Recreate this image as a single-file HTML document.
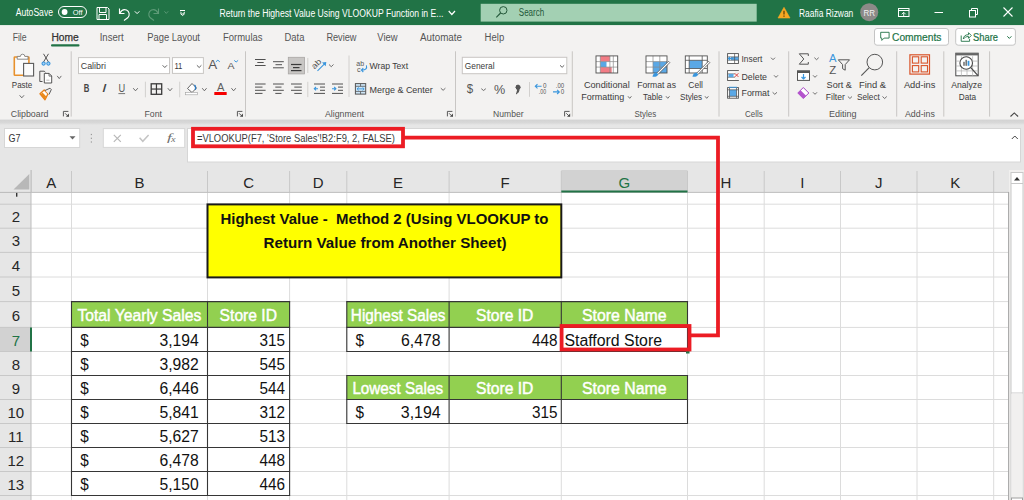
<!DOCTYPE html>
<html><head><meta charset="utf-8"><style>
html,body{margin:0;padding:0;width:1024px;height:500px;overflow:hidden;background:#fff}
svg{display:block}
text{font-family:"Liberation Sans",sans-serif}
</style></head><body>
<svg width="1024" height="500" viewBox="0 0 1024 500">
<defs><linearGradient id="sh" x1="0" y1="0" x2="0" y2="1"><stop offset="0" stop-color="#d2d2d2"/><stop offset="0.6" stop-color="#d8d8d8"/><stop offset="1" stop-color="#e6e6e6"/></linearGradient></defs>
<rect x="0" y="0" width="1024" height="500" fill="#ffffff" />
<rect x="0" y="0" width="1024" height="25.3" fill="#217346" />
<rect x="0" y="25.3" width="1024" height="94.2" fill="#f3f2f1" />
<rect x="0" y="119.5" width="1024" height="5.5" fill="url(#sh)" />
<rect x="0" y="125" width="1024" height="45" fill="#e6e6e6" />
<text x="15.7" y="16.3" font-size="10" font-weight="normal" fill="#ffffff" text-anchor="start" textLength="37.3" lengthAdjust="spacingAndGlyphs" >AutoSave</text>
<rect x="58.5" y="6.5" width="28" height="11" fill="none" stroke="#ffffff" stroke-width="1" rx="5.5" />
<circle cx="64.6" cy="12" r="2.9" fill="#ffffff"/>
<text x="72.7" y="15.2" font-size="7.5" font-weight="normal" fill="#ffffff" text-anchor="start" textLength="9.8" lengthAdjust="spacingAndGlyphs" >Off</text>
<path d="M97 7.5 h10.5 l1.5 1.5 v10.5 h-12 z" stroke="#ffffff" fill="none" stroke-width="1" />
<path d="M99.5 7.5 v5 h6.5 v-5" stroke="#ffffff" fill="none" stroke-width="1" />
<path d="M99 19.5 v-5 h7.5 v5" stroke="#ffffff" fill="none" stroke-width="1" />
<path d="M119.5 8.5 v5 h5" stroke="#ffffff" fill="none" stroke-width="1.1" />
<path d="M120 13 c1.5-3 4-4 6.5-3 c3 1.5 3.5 5 1.5 7.5 l-4 3" stroke="#ffffff" fill="none" stroke-width="1.1" />
<path d="M134.8 11.3 L137.10000000000002 13.6 L139.4 11.3" stroke="#ffffff" fill="none" stroke-width="1" />
<path d="M158.5 8.5 v5 h-5" stroke="#5e9b78" fill="none" stroke-width="1.1" />
<path d="M158 13 c-1.5-3 -4-4 -6.5-3 c-3 1.5 -3.5 5 -1.5 7.5 l4 3" stroke="#5e9b78" fill="none" stroke-width="1.1" />
<path d="M164.4 11.3 L166.3 13.4 L168.2 11.3" stroke="#5e9b78" fill="none" stroke-width="0.9" />
<line x1="180" y1="10.5" x2="185" y2="10.5" stroke="#ffffff" stroke-width="1" />
<path d="M180.3 12 L182.60000000000002 14 L184.9 12" stroke="#ffffff" fill="none" stroke-width="1" />
<path d="M180.3 13.5 L182.60000000000002 15.5 L184.9 13.5" stroke="#ffffff" fill="none" stroke-width="1" />
<text x="219.5" y="17.2" font-size="10" font-weight="normal" fill="#ffffff" text-anchor="start" textLength="224" lengthAdjust="spacingAndGlyphs" >Return the Highest Value Using VLOOKUP Function in E...</text>
<path d="M448.7 11 L451.85 14.5 L455 11" stroke="#ffffff" fill="none" stroke-width="1.2" />
<rect x="480.7" y="3.8" width="276" height="17.8" fill="#a3d0b3" />
<circle cx="503.3" cy="10.3" r="3.7" fill="none" stroke="#24583a" stroke-width="1"/>
<line x1="500.6" y1="13" x2="496.3" y2="17.4" stroke="#24583a" stroke-width="1.1" />
<text x="518.8" y="16.3" font-size="10" font-weight="normal" fill="#24583a" text-anchor="start" textLength="25.4" lengthAdjust="spacingAndGlyphs" >Search</text>
<path d="M784 7.3 l6 10.7 h-12 z" stroke="#f7a823" fill="#f7a823" stroke-width="0.6" stroke-linejoin="round"/>
<line x1="784" y1="10.8" x2="784" y2="14.6" stroke="#4a3000" stroke-width="1.1" />
<line x1="784" y1="15.6" x2="784" y2="16.8" stroke="#4a3000" stroke-width="1.1" />
<text x="799" y="16.9" font-size="10" font-weight="normal" fill="#ffffff" text-anchor="start" textLength="54.3" lengthAdjust="spacingAndGlyphs" >Raafia Rizwan</text>
<circle cx="869.2" cy="12.2" r="9" fill="#8c8a88"/>
<text x="869.2" y="15.6" font-size="8.5" font-weight="normal" fill="#f2f2f2" text-anchor="middle" textLength="11.5" lengthAdjust="spacingAndGlyphs" >RR</text>
<rect x="898.5" y="8.5" width="10.5" height="8" fill="none" stroke="#ffffff" stroke-width="1" />
<line x1="898.5" y1="10.5" x2="909" y2="10.5" stroke="#ffffff" stroke-width="1" />
<path d="M901.7 14.3 l2 -2 l2 2 M903.7 12.5 v4" stroke="#ffffff" fill="none" stroke-width="0.9" />
<line x1="934.5" y1="12.5" x2="943" y2="12.5" stroke="#ffffff" stroke-width="1" />
<rect x="969.5" y="10.5" width="6" height="6.5" fill="none" stroke="#ffffff" stroke-width="1" />
<path d="M971.5 10.5 v-2 h6 v6 h-2" stroke="#ffffff" fill="none" stroke-width="1" />
<path d="M1003.5 7.5 l9 9 M1012.5 7.5 l-9 9" stroke="#ffffff" fill="none" stroke-width="1.1" />
<text x="12.7" y="40.6" font-size="10" font-weight="normal" fill="#555555" text-anchor="start" textLength="13.9" lengthAdjust="spacingAndGlyphs" >File</text>
<text x="51.4" y="40.6" font-size="10" font-weight="normal" fill="#333333" text-anchor="start" textLength="27.3" lengthAdjust="spacingAndGlyphs" stroke="#333" stroke-width="0.25">Home</text>
<text x="99.7" y="40.6" font-size="10" font-weight="normal" fill="#555555" text-anchor="start" textLength="23.9" lengthAdjust="spacingAndGlyphs" >Insert</text>
<text x="147.2" y="40.6" font-size="10" font-weight="normal" fill="#555555" text-anchor="start" textLength="52.8" lengthAdjust="spacingAndGlyphs" >Page Layout</text>
<text x="223" y="40.6" font-size="10" font-weight="normal" fill="#555555" text-anchor="start" textLength="39.5" lengthAdjust="spacingAndGlyphs" >Formulas</text>
<text x="284.5" y="40.6" font-size="10" font-weight="normal" fill="#555555" text-anchor="start" textLength="19.9" lengthAdjust="spacingAndGlyphs" >Data</text>
<text x="326.4" y="40.6" font-size="10" font-weight="normal" fill="#555555" text-anchor="start" textLength="30.1" lengthAdjust="spacingAndGlyphs" >Review</text>
<text x="377.3" y="40.6" font-size="10" font-weight="normal" fill="#555555" text-anchor="start" textLength="20.3" lengthAdjust="spacingAndGlyphs" >View</text>
<text x="420" y="40.6" font-size="10" font-weight="normal" fill="#555555" text-anchor="start" textLength="42" lengthAdjust="spacingAndGlyphs" >Automate</text>
<text x="484.6" y="40.6" font-size="10" font-weight="normal" fill="#555555" text-anchor="start" textLength="19.6" lengthAdjust="spacingAndGlyphs" >Help</text>
<rect x="51" y="44.2" width="28.5" height="2.3" fill="#217346" rx="1" />
<rect x="874.5" y="28.5" width="74" height="16.7" fill="#ffffff" stroke="#c4c4c4" stroke-width="1" rx="2.5" />
<path d="M880.7 32.3 h8.4 v5.8 h-5 l-2.3 2.3 v-2.3 h-1.1 z" stroke="#217346" fill="none" stroke-width="0.9" />
<text x="892" y="40.5" font-size="10" font-weight="normal" fill="#217346" text-anchor="start" textLength="49.4" lengthAdjust="spacingAndGlyphs" stroke="#217346" stroke-width="0.2">Comments</text>
<rect x="955.7" y="28.5" width="59.7" height="16.7" fill="#ffffff" stroke="#c4c4c4" stroke-width="1" rx="2.5" />
<path d="M961.2 35.5 v5.8 h8.4 v-2.5" stroke="#217346" fill="none" stroke-width="0.9" />
<path d="M963.3 39 c0.3-2.8 2-4.3 5.2-4.3 v-2 l2.8 2.8 l-2.8 2.8 v-1.8 c-2.2 0-3.8 0.8-5.2 2.5 z" stroke="#217346" fill="none" stroke-width="0.9" />
<text x="973" y="40.5" font-size="10" font-weight="normal" fill="#217346" text-anchor="start" textLength="25" lengthAdjust="spacingAndGlyphs" stroke="#217346" stroke-width="0.2">Share</text>
<path d="M1007.3 36.3 L1009.3499999999999 38.4 L1011.4 36.3" stroke="#217346" fill="none" stroke-width="1" />
<line x1="71.2" y1="51.3" x2="71.2" y2="116.6" stroke="#c8c6c4" stroke-width="1" />
<line x1="245.5" y1="51.3" x2="245.5" y2="116.6" stroke="#c8c6c4" stroke-width="1" />
<line x1="455.5" y1="51.3" x2="455.5" y2="116.6" stroke="#c8c6c4" stroke-width="1" />
<line x1="572.3" y1="51.3" x2="572.3" y2="116.6" stroke="#c8c6c4" stroke-width="1" />
<line x1="719" y1="51.3" x2="719" y2="116.6" stroke="#c8c6c4" stroke-width="1" />
<line x1="788.7" y1="51.3" x2="788.7" y2="116.6" stroke="#c8c6c4" stroke-width="1" />
<line x1="896.7" y1="51.3" x2="896.7" y2="116.6" stroke="#c8c6c4" stroke-width="1" />
<line x1="943.8" y1="51.3" x2="943.8" y2="116.6" stroke="#c8c6c4" stroke-width="1" />
<line x1="989.6" y1="51.3" x2="989.6" y2="116.6" stroke="#c8c6c4" stroke-width="1" />
<text x="10.8" y="117" font-size="9.3" font-weight="normal" fill="#525252" text-anchor="start" textLength="37.7" lengthAdjust="spacingAndGlyphs" >Clipboard</text>
<text x="144.5" y="117" font-size="9.3" font-weight="normal" fill="#525252" text-anchor="start" textLength="17.5" lengthAdjust="spacingAndGlyphs" >Font</text>
<text x="325" y="117" font-size="9.3" font-weight="normal" fill="#525252" text-anchor="start" textLength="39" lengthAdjust="spacingAndGlyphs" >Alignment</text>
<text x="493.1" y="117" font-size="9.3" font-weight="normal" fill="#525252" text-anchor="start" textLength="30.5" lengthAdjust="spacingAndGlyphs" >Number</text>
<text x="634.5" y="117" font-size="9.3" font-weight="normal" fill="#525252" text-anchor="start" textLength="21.7" lengthAdjust="spacingAndGlyphs" >Styles</text>
<text x="745" y="117" font-size="9.3" font-weight="normal" fill="#525252" text-anchor="start" textLength="17.7" lengthAdjust="spacingAndGlyphs" >Cells</text>
<text x="829" y="117" font-size="9.3" font-weight="normal" fill="#525252" text-anchor="start" textLength="27.6" lengthAdjust="spacingAndGlyphs" >Editing</text>
<text x="905" y="117" font-size="9.3" font-weight="normal" fill="#525252" text-anchor="start" textLength="29.8" lengthAdjust="spacingAndGlyphs" >Add-ins</text>
<path d="M63.4 116.4 v-5 h5" stroke="#5a5a5a" fill="none" stroke-width="1" />
<path d="M65.1 113.3 l3 3" stroke="#5a5a5a" fill="none" stroke-width="1" />
<path d="M69.0 113.6 v3.2 h-3.2 z" stroke="none" fill="#4a4a4a" stroke-width="1" />
<path d="M237.4 116.4 v-5 h5" stroke="#5a5a5a" fill="none" stroke-width="1" />
<path d="M239.10000000000002 113.3 l3 3" stroke="#5a5a5a" fill="none" stroke-width="1" />
<path d="M243.0 113.6 v3.2 h-3.2 z" stroke="none" fill="#4a4a4a" stroke-width="1" />
<path d="M447.40000000000003 116.4 v-5 h5" stroke="#5a5a5a" fill="none" stroke-width="1" />
<path d="M449.1 113.3 l3 3" stroke="#5a5a5a" fill="none" stroke-width="1" />
<path d="M453.0 113.6 v3.2 h-3.2 z" stroke="none" fill="#4a4a4a" stroke-width="1" />
<path d="M564.6 116.4 v-5 h5" stroke="#5a5a5a" fill="none" stroke-width="1" />
<path d="M566.3 113.3 l3 3" stroke="#5a5a5a" fill="none" stroke-width="1" />
<path d="M570.2 113.6 v3.2 h-3.2 z" stroke="none" fill="#4a4a4a" stroke-width="1" />
<path d="M1010.5 116.5 l3.8 -3.6 l3.8 3.6" stroke="#444" fill="none" stroke-width="1.1" />
<rect x="14.3" y="57" width="14.6" height="18.3" fill="#fbfbfb" stroke="#e8912d" stroke-width="1.6" rx="0.6" />
<path d="M17.2 59.2 v-2.8 h3.2 a2.2 2.2 0 0 1 4.4 0 h3.2 v2.8 z" stroke="#808080" fill="#ffffff" stroke-width="0.9" />
<rect x="23.6" y="63.4" width="10" height="12.6" fill="#fbfbfb" stroke="#5a5a5a" stroke-width="1.1" />
<text x="11.8" y="87.8" font-size="9.5" font-weight="normal" fill="#3b3b3b" text-anchor="start" textLength="20.5" lengthAdjust="spacingAndGlyphs" >Paste</text>
<path d="M19.6 95.3 L21.8 97.8 L24 95.3" stroke="#555" fill="none" stroke-width="0.85" />
<path d="M43.5 53.8 l5 8.2 M48.5 53.8 l-5 8.2" stroke="#444" fill="none" stroke-width="0.9" />
<circle cx="43.6" cy="63.6" r="1.6" fill="#a9d2f3" stroke="#3a96dd" stroke-width="1.1"/>
<circle cx="48.4" cy="63.6" r="1.6" fill="#a9d2f3" stroke="#3a96dd" stroke-width="1.1"/>
<path d="M42.5 81.5 h-2.7 v-10.3 h4.5 l1.2 1.2" stroke="#444" fill="none" stroke-width="0.9" />
<path d="M44.3 73.4 h4.8 l2.6 2.6 v7 h-7.4 z" stroke="#444" fill="#fff" stroke-width="0.9" />
<path d="M49 73.4 v2.7 h2.7" stroke="#444" fill="none" stroke-width="0.7" />
<line x1="46.3" y1="80.2" x2="49.5" y2="80.2" stroke="#aaa" stroke-width="0.8" />
<path d="M57.2 75.9 L59.25 78.6 L61.3 75.9" stroke="#555" fill="none" stroke-width="0.85" />
<path d="M40 93.7 L44.2 90 L48 93.8 L45 99.8 z" stroke="#e8821c" fill="#ffffff" stroke-width="1.4" stroke-linejoin="round"/>
<path d="M40.5 94.2 L45 99.2 L46.3 96.5 L42.5 92.6 z" stroke="none" fill="#ea8a1c" stroke-width="1" />
<path d="M45 90.5 l5 -2.3 l1.3 1.3 l-2.3 5" stroke="#4a4a4a" fill="#eee" stroke-width="0.9" />
<rect x="78.5" y="57.6" width="91" height="16" fill="#ffffff" stroke="#c8c6c4" stroke-width="1" />
<text x="80.8" y="69.1" font-size="9.5" font-weight="normal" fill="#3b3b3b" text-anchor="start" textLength="25.1" lengthAdjust="spacingAndGlyphs" >Calibri</text>
<path d="M162.6 65.3 L164.8 67.5 L167 65.3" stroke="#444" fill="none" stroke-width="0.85" />
<rect x="172.5" y="57.6" width="30.9" height="15.8" fill="#ffffff" stroke="#c8c6c4" stroke-width="1" />
<text x="174.4" y="69.1" font-size="9.5" font-weight="normal" fill="#3b3b3b" text-anchor="start" textLength="8" lengthAdjust="spacingAndGlyphs" >11</text>
<path d="M196.9 65.3 L199.15 67.5 L201.4 65.3" stroke="#444" fill="none" stroke-width="0.85" />
<text x="208.2" y="68.8" font-size="12.5" font-weight="normal" fill="#555" text-anchor="start" textLength="8.9" lengthAdjust="spacingAndGlyphs" >A</text>
<path d="M215.9 61.8 L217.85000000000002 60.2 L219.8 61.8" stroke="#3a96dd" fill="none" stroke-width="1" />
<text x="227.5" y="68.8" font-size="9.8" font-weight="normal" fill="#555" text-anchor="start" textLength="7" lengthAdjust="spacingAndGlyphs" >A</text>
<path d="M234.2 60.4 L236.14999999999998 62 L238.1 60.4" stroke="#3a96dd" fill="none" stroke-width="1" />
<text x="83.8" y="91.9" font-size="10" font-weight="bold" fill="#444" text-anchor="start" textLength="5.6" lengthAdjust="spacingAndGlyphs" >B</text>
<text x="102.1" y="91.9" font-size="10" font-weight="normal" fill="#444" text-anchor="start" textLength="4.6" lengthAdjust="spacingAndGlyphs" font-style="italic">I</text>
<text x="118.4" y="91.9" font-size="10" font-weight="normal" fill="#555" text-anchor="start" textLength="6.7" lengthAdjust="spacingAndGlyphs" >U</text>
<line x1="118.4" y1="93.6" x2="125.1" y2="93.6" stroke="#555" stroke-width="0.8" />
<path d="M133.2 88.2 L135.5 90.8 L137.8 88.2" stroke="#555" fill="none" stroke-width="0.85" />
<line x1="145.4" y1="81.7" x2="145.4" y2="97.3" stroke="#d2d0ce" stroke-width="1" />
<rect x="151.2" y="83.8" width="10.5" height="10.5" fill="none" stroke="#3a3a3a" stroke-width="1.3" />
<line x1="156.45" y1="83.8" x2="156.45" y2="94.3" stroke="#3a3a3a" stroke-width="1.2" />
<line x1="151.2" y1="89.05" x2="161.7" y2="89.05" stroke="#3a3a3a" stroke-width="1.2" />
<path d="M167.8 88.2 L170.0 90.8 L172.2 88.2" stroke="#555" fill="none" stroke-width="0.85" />
<line x1="179.7" y1="81.7" x2="179.7" y2="97.3" stroke="#d2d0ce" stroke-width="1" />
<path d="M187.5 88.5 l4.5 -5 l4.5 4.5 l-4.5 4.5 z" stroke="#555" fill="#fff" stroke-width="0.9" />
<path d="M194.3 85.3 c1.2 0.3 1.5 2 1 4.5" stroke="#2f7cc4" fill="none" stroke-width="1.4" />
<rect x="185.5" y="92.6" width="11.8" height="2.2" fill="#ffffff" stroke="#a0a0a0" stroke-width="0.6" />
<path d="M202.2 88.2 L204.39999999999998 90.8 L206.6 88.2" stroke="#555" fill="none" stroke-width="0.85" />
<text x="216.9" y="91.4" font-size="10.5" font-weight="normal" fill="#606060" text-anchor="start" textLength="7.4" lengthAdjust="spacingAndGlyphs" >A</text>
<rect x="214.3" y="92.1" width="12.4" height="3" fill="#f50000" rx="0.4" />
<path d="M231.4 88.2 L233.60000000000002 90.8 L235.8 88.2" stroke="#555" fill="none" stroke-width="0.85" />
<rect x="288.3" y="57.3" width="16.3" height="16.6" fill="#c8c6c4" stroke="#a8a6a4" stroke-width="0.8" />
<line x1="255" y1="59.5" x2="265.6" y2="59.5" stroke="#505050" stroke-width="1" />
<line x1="257.3" y1="62.5" x2="263.7" y2="62.5" stroke="#505050" stroke-width="1" />
<line x1="255" y1="65.5" x2="265.6" y2="65.5" stroke="#505050" stroke-width="1" />
<line x1="273" y1="61.7" x2="283.8" y2="61.7" stroke="#505050" stroke-width="1" />
<line x1="275.5" y1="64.7" x2="282" y2="64.7" stroke="#505050" stroke-width="1" />
<line x1="273" y1="67.8" x2="283.8" y2="67.8" stroke="#505050" stroke-width="1" />
<line x1="291" y1="64.5" x2="301.5" y2="64.5" stroke="#3a3a3a" stroke-width="1.2" />
<line x1="293" y1="67.6" x2="299.5" y2="67.6" stroke="#3a3a3a" stroke-width="1.2" />
<line x1="291" y1="70.6" x2="301.5" y2="70.6" stroke="#3a3a3a" stroke-width="1.2" />
<line x1="307.8" y1="57.9" x2="307.8" y2="73" stroke="#d2d0ce" stroke-width="1" />
<text x="314.5" y="69.5" font-size="8" font-weight="normal" fill="#555" text-anchor="start" textLength="10.5" lengthAdjust="spacingAndGlyphs" transform="rotate(-45 314.5 69.5)">ab</text>
<path d="M317.5 70.8 L325 63.3" stroke="#3a96dd" fill="none" stroke-width="1.1" />
<path d="M326.3 62 l-0.6 4.3 l-3.7 -3.7 z" stroke="none" fill="#3a96dd" stroke-width="1" />
<path d="M329 64.5 L331.25 66.7 L333.5 64.5" stroke="#555" fill="none" stroke-width="0.85" />
<line x1="255" y1="84" x2="265.6" y2="84" stroke="#505050" stroke-width="1" />
<line x1="273" y1="84" x2="283.8" y2="84" stroke="#505050" stroke-width="1" />
<line x1="291" y1="84" x2="301.8" y2="84" stroke="#505050" stroke-width="1" />
<line x1="255" y1="87.1" x2="262.5" y2="87.1" stroke="#505050" stroke-width="1" />
<line x1="275.3" y1="87.1" x2="281.5" y2="87.1" stroke="#505050" stroke-width="1" />
<line x1="294.3" y1="87.1" x2="301.8" y2="87.1" stroke="#505050" stroke-width="1" />
<line x1="255" y1="90.3" x2="265.6" y2="90.3" stroke="#505050" stroke-width="1" />
<line x1="273" y1="90.3" x2="283.8" y2="90.3" stroke="#505050" stroke-width="1" />
<line x1="291" y1="90.3" x2="301.8" y2="90.3" stroke="#505050" stroke-width="1" />
<line x1="255" y1="93.4" x2="262.5" y2="93.4" stroke="#505050" stroke-width="1" />
<line x1="275.3" y1="93.4" x2="281.5" y2="93.4" stroke="#505050" stroke-width="1" />
<line x1="294.3" y1="93.4" x2="301.8" y2="93.4" stroke="#505050" stroke-width="1" />
<line x1="307.8" y1="81.8" x2="307.8" y2="97.1" stroke="#d2d0ce" stroke-width="1" />
<line x1="314" y1="84" x2="325" y2="84" stroke="#505050" stroke-width="1" />
<line x1="332" y1="84" x2="343" y2="84" stroke="#505050" stroke-width="1" />
<line x1="320" y1="87.1" x2="325" y2="87.1" stroke="#505050" stroke-width="1" />
<line x1="338" y1="87.1" x2="343" y2="87.1" stroke="#505050" stroke-width="1" />
<line x1="320" y1="90.3" x2="325" y2="90.3" stroke="#505050" stroke-width="1" />
<line x1="338" y1="90.3" x2="343" y2="90.3" stroke="#505050" stroke-width="1" />
<line x1="314" y1="93.4" x2="325" y2="93.4" stroke="#505050" stroke-width="1" />
<line x1="332" y1="93.4" x2="343" y2="93.4" stroke="#505050" stroke-width="1" />
<path d="M318 88.7 h-3.5 M316 87 l-1.7 1.7 l1.7 1.7" stroke="#3a96dd" fill="none" stroke-width="1.1" />
<path d="M332 88.7 h3.8 M334.2 87 l1.7 1.7 l-1.7 1.7" stroke="#3a96dd" fill="none" stroke-width="1.1" />
<line x1="349" y1="55.5" x2="349" y2="97" stroke="#d2d0ce" stroke-width="1" />
<text x="356.3" y="65.5" font-size="7.2" font-weight="normal" fill="#555" text-anchor="start" textLength="7.8" lengthAdjust="spacingAndGlyphs" >ab</text>
<text x="357" y="71.6" font-size="7.2" font-weight="normal" fill="#555" text-anchor="start" textLength="3.6" lengthAdjust="spacingAndGlyphs" >c</text>
<path d="M366.4 65.3 c0.8 3 -0.5 4.8 -4.5 4.8 M363.3 68.2 l-1.9 1.9 l1.9 1.9" stroke="#3a96dd" fill="none" stroke-width="1.1" />
<text x="369.5" y="68.7" font-size="9.3" font-weight="normal" fill="#3b3b3b" text-anchor="start" textLength="38.6" lengthAdjust="spacingAndGlyphs" >Wrap Text</text>
<rect x="355.4" y="83.6" width="10.3" height="10.5" fill="#cfe6f7" stroke="#555" stroke-width="1" />
<line x1="355.4" y1="86.3" x2="365.7" y2="86.3" stroke="#555" stroke-width="0.8" />
<line x1="355.4" y1="91.4" x2="365.7" y2="91.4" stroke="#555" stroke-width="0.8" />
<line x1="360.55" y1="83.6" x2="360.55" y2="86.3" stroke="#555" stroke-width="0.8" />
<line x1="360.55" y1="91.4" x2="360.55" y2="94.1" stroke="#555" stroke-width="0.8" />
<path d="M357 88.85 h7.2 M358.7 87.3 l-1.6 1.55 l1.6 1.55 M362.5 87.3 l1.6 1.55 l-1.6 1.55" stroke="#3a96dd" fill="none" stroke-width="0.9" />
<text x="369.5" y="92.6" font-size="9.3" font-weight="normal" fill="#3b3b3b" text-anchor="start" textLength="63.3" lengthAdjust="spacingAndGlyphs" >Merge &amp; Center</text>
<path d="M440.8 88.2 L443.1 90.3 L445.4 88.2" stroke="#555" fill="none" stroke-width="0.85" />
<rect x="462.3" y="57.3" width="104.5" height="16.4" fill="#ffffff" stroke="#c8c6c4" stroke-width="1" />
<text x="464.8" y="69.1" font-size="9.3" font-weight="normal" fill="#3b3b3b" text-anchor="start" textLength="29.7" lengthAdjust="spacingAndGlyphs" >General</text>
<path d="M560 65.3 L562.1 67.3 L564.2 65.3" stroke="#444" fill="none" stroke-width="0.85" />
<text x="466.8" y="93.3" font-size="12.5" font-weight="normal" fill="#555" text-anchor="start" textLength="6.4" lengthAdjust="spacingAndGlyphs" >$</text>
<path d="M481.3 88.7 L483.55 90.5 L485.8 88.7" stroke="#555" fill="none" stroke-width="0.85" />
<text x="493.9" y="94.3" font-size="12.5" font-weight="normal" fill="#555" text-anchor="start" textLength="11.2" lengthAdjust="spacingAndGlyphs" >%</text>
<path d="M518.5 85 a2.3 2.3 0 1 0 0.5 4.5 c0 2 -1 3.5 -3 4.5 M519 89.5 c0.3 -1 0.5 -2 -0.5 -4.5" stroke="#555" fill="#555" stroke-width="1" />
<circle cx="518.2" cy="87.3" r="2.4" fill="#555"/>
<line x1="529.5" y1="82" x2="529.5" y2="96.8" stroke="#d2d0ce" stroke-width="1" />
<path d="M541.6 86.3 h-6.3 M537.5 84.2 l-2.2 2.1 l2.2 2.1" stroke="#3a96dd" fill="none" stroke-width="1.1" />
<text x="543" y="88.4" font-size="7" font-weight="normal" fill="#555" text-anchor="start" textLength="3.5" lengthAdjust="spacingAndGlyphs" >0</text>
<text x="538.8" y="94" font-size="7" font-weight="normal" fill="#555" text-anchor="start" textLength="7.3" lengthAdjust="spacingAndGlyphs" >.00</text>
<text x="555.8" y="88.4" font-size="7" font-weight="normal" fill="#555" text-anchor="start" textLength="8.4" lengthAdjust="spacingAndGlyphs" >.00</text>
<path d="M553 91.9 h6 M557.1 89.8 l2.2 2.1 l-2.2 2.1" stroke="#3a96dd" fill="none" stroke-width="1.1" />
<text x="560.7" y="94" font-size="7" font-weight="normal" fill="#555" text-anchor="start" textLength="3.5" lengthAdjust="spacingAndGlyphs" >0</text>
<rect x="596.3" y="56.2" width="21" height="16.3" fill="#fff" />
<rect x="600.3" y="55.9" width="9.6" height="5.7" fill="#f27c85" />
<rect x="600.3" y="61.6" width="6.2" height="5.5" fill="#5aa8e6" />
<rect x="600.3" y="67.1" width="11.4" height="5.9" fill="#f27c85" />
<line x1="600.3" y1="55.9" x2="600.3" y2="73" stroke="#8a8a8a" stroke-width="0.7" />
<line x1="609.9" y1="55.9" x2="609.9" y2="73" stroke="#8a8a8a" stroke-width="0.7" />
<line x1="613.3" y1="55.9" x2="613.3" y2="73" stroke="#8a8a8a" stroke-width="0.7" />
<line x1="596" y1="61.6" x2="617.7" y2="61.6" stroke="#8a8a8a" stroke-width="0.7" />
<line x1="596" y1="67.1" x2="617.7" y2="67.1" stroke="#8a8a8a" stroke-width="0.7" />
<rect x="596" y="55.9" width="21.700000000000045" height="17.1" fill="none" stroke="#505050" stroke-width="0.9" />
<text x="583.9" y="87.6" font-size="9.3" font-weight="normal" fill="#3b3b3b" text-anchor="start" textLength="45.8" lengthAdjust="spacingAndGlyphs" >Conditional</text>
<text x="581.2" y="99.5" font-size="9.3" font-weight="normal" fill="#3b3b3b" text-anchor="start" textLength="43" lengthAdjust="spacingAndGlyphs" >Formatting</text>
<path d="M628 96.3 L629.7 98.3 L631.4 96.3" stroke="#555" fill="none" stroke-width="0.85" />
<rect x="646" y="55.9" width="21" height="17.1" fill="#fff" />
<rect x="653" y="61.6" width="14" height="11.4" fill="#5aa8e6" />
<line x1="653" y1="55.9" x2="653" y2="73" stroke="#8a8a8a" stroke-width="0.7" />
<line x1="659.8" y1="55.9" x2="659.8" y2="73" stroke="#8a8a8a" stroke-width="0.7" />
<line x1="646" y1="61.6" x2="667" y2="61.6" stroke="#8a8a8a" stroke-width="0.7" />
<line x1="646" y1="67.1" x2="667" y2="67.1" stroke="#8a8a8a" stroke-width="0.7" />
<rect x="646" y="55.9" width="21" height="17.1" fill="none" stroke="#505050" stroke-width="0.9" />
<path d="M656.5 73.3 L668.5 61.3 l1.3 1.3 L657.8 74.6 z" stroke="#555" fill="#fff" stroke-width="0.8" />
<path d="M652.5 76.8 c0.5 -2.5 1.5 -4 3.8 -4.3 l1.8 1.8 c-0.5 2.2 -2.5 2.8 -5.6 2.5 z" stroke="none" fill="#3a96dd" stroke-width="1" />
<text x="637.2" y="87.6" font-size="9.3" font-weight="normal" fill="#3b3b3b" text-anchor="start" textLength="38.8" lengthAdjust="spacingAndGlyphs" >Format as</text>
<text x="643.1" y="99.5" font-size="9.3" font-weight="normal" fill="#3b3b3b" text-anchor="start" textLength="19.4" lengthAdjust="spacingAndGlyphs" >Table</text>
<path d="M666 96.3 L667.75 98.3 L669.5 96.3" stroke="#555" fill="none" stroke-width="0.85" />
<rect x="685.3" y="55.9" width="22" height="17.1" fill="#fff" stroke="#505050" stroke-width="0.9" />
<rect x="689.2" y="60.3" width="13" height="8.2" fill="#5aa8e6" />
<line x1="689.2" y1="55.9" x2="689.2" y2="73" stroke="#505050" stroke-width="0.8" />
<line x1="685.3" y1="60.3" x2="707.3" y2="60.3" stroke="#505050" stroke-width="0.8" />
<line x1="685.3" y1="68.5" x2="707.3" y2="68.5" stroke="#505050" stroke-width="0.8" />
<line x1="702.2" y1="55.9" x2="702.2" y2="73" stroke="#505050" stroke-width="0.8" />
<path d="M696.5 73.3 L708.5 61.3 l1.3 1.3 L697.8 74.6 z" stroke="#555" fill="#fff" stroke-width="0.8" />
<path d="M692.5 76.8 c0.5 -2.5 1.5 -4 3.8 -4.3 l1.8 1.8 c-0.5 2.2 -2.5 2.8 -5.6 2.5 z" stroke="none" fill="#3a96dd" stroke-width="1" />
<text x="688.3" y="87.6" font-size="9.3" font-weight="normal" fill="#3b3b3b" text-anchor="start" textLength="14.6" lengthAdjust="spacingAndGlyphs" >Cell</text>
<text x="680" y="99.5" font-size="9.3" font-weight="normal" fill="#3b3b3b" text-anchor="start" textLength="22.2" lengthAdjust="spacingAndGlyphs" >Styles</text>
<path d="M705 96.3 L706.7 98.3 L708.4 96.3" stroke="#555" fill="none" stroke-width="0.85" />
<rect x="727.6" y="53.6" width="10.8" height="9.9" fill="#fff" stroke="#505050" stroke-width="0.9" />
<rect x="731" y="56.9" width="7.4" height="3.3" fill="#5aa8e6" />
<line x1="727.6" y1="56.9" x2="738.4" y2="56.9" stroke="#505050" stroke-width="0.7" />
<line x1="727.6" y1="60.2" x2="738.4" y2="60.2" stroke="#505050" stroke-width="0.7" />
<line x1="734.6" y1="53.6" x2="734.6" y2="63.5" stroke="#505050" stroke-width="0.7" />
<path d="M733.5 58.5 h-5 M730 56.8 l-1.6 1.7 l1.6 1.7" stroke="#3a96dd" fill="none" stroke-width="1.1" />
<text x="741.5" y="61.9" font-size="9.3" font-weight="normal" fill="#3b3b3b" text-anchor="start" textLength="20.9" lengthAdjust="spacingAndGlyphs" >Insert</text>
<path d="M771 57.7 L773.0 59.7 L775 57.7" stroke="#555" fill="none" stroke-width="0.85" />
<rect x="727.6" y="70.6" width="10.8" height="9.9" fill="#fff" stroke="#505050" stroke-width="0.9" />
<line x1="727.6" y1="73.9" x2="738.4" y2="73.9" stroke="#505050" stroke-width="0.7" />
<line x1="727.6" y1="77.2" x2="738.4" y2="77.2" stroke="#505050" stroke-width="0.7" />
<rect x="728.5" y="73.9" width="5" height="3.3" fill="#5aa8e6" />
<rect x="735" y="71" width="4.5" height="9" fill="#f3f2f1" />
<path d="M734.8 73.3 l3.6 3.6 M738.4 73.3 l-3.6 3.6" stroke="#e04040" fill="none" stroke-width="1" />
<text x="741.5" y="79.5" font-size="9.3" font-weight="normal" fill="#3b3b3b" text-anchor="start" textLength="25.5" lengthAdjust="spacingAndGlyphs" >Delete</text>
<path d="M774 75.3 L776.0 77.3 L778 75.3" stroke="#555" fill="none" stroke-width="0.85" />
<rect x="727.6" y="87.6" width="10.8" height="10.6" fill="#fff" stroke="#505050" stroke-width="0.9" />
<rect x="729.5" y="89.8" width="7" height="6.5" fill="#5aa8e6" />
<line x1="727.6" y1="89.8" x2="738.4" y2="89.8" stroke="#505050" stroke-width="0.7" />
<line x1="727.6" y1="96.3" x2="738.4" y2="96.3" stroke="#505050" stroke-width="0.7" />
<line x1="729.5" y1="87.6" x2="729.5" y2="98.2" stroke="#505050" stroke-width="0.7" />
<line x1="736.5" y1="87.6" x2="736.5" y2="98.2" stroke="#505050" stroke-width="0.7" />
<line x1="729" y1="87.3" x2="737" y2="87.3" stroke="#3a96dd" stroke-width="1" />
<text x="741.5" y="96.2" font-size="9.3" font-weight="normal" fill="#3b3b3b" text-anchor="start" textLength="28" lengthAdjust="spacingAndGlyphs" >Format</text>
<path d="M772.6 92.3 L774.8 94.3 L777 92.3" stroke="#555" fill="none" stroke-width="0.85" />
<path d="M808.3 56 v-2.2 h-9 l4.5 5.2 l-4.5 5.2 h9 v-2.2" stroke="#555" fill="none" stroke-width="1" />
<path d="M814.4 57.7 L816.55 59.7 L818.7 57.7" stroke="#555" fill="none" stroke-width="0.85" />
<rect x="797.5" y="70.8" width="12" height="9.6" fill="#fff" stroke="#555" stroke-width="1" />
<rect x="797.5" y="70.8" width="12" height="2.2" fill="#555" />
<path d="M803.5 74 v5 M801.5 77 l2 2 l2 -2" stroke="#3a96dd" fill="none" stroke-width="1.2" />
<path d="M813 75.3 L815.0 77.3 L817 75.3" stroke="#555" fill="none" stroke-width="0.85" />
<path d="M797.8 93 l5.5 -5.5 l5.5 5.5 l-5.5 5.5 z" stroke="#a742c4" fill="#fff" stroke-width="1" />
<path d="M797.8 93 l2.75 -2.75 l5.5 5.5 l-2.75 2.75 z" stroke="none" fill="#b452cd" stroke-width="1" />
<path d="M813 92.3 L815.0 94.3 L817 92.3" stroke="#555" fill="none" stroke-width="0.85" />
<text x="829.1" y="62.1" font-size="11" font-weight="normal" fill="#3a96dd" text-anchor="start" textLength="7.5" lengthAdjust="spacingAndGlyphs" >A</text>
<text x="829.3" y="73.7" font-size="11" font-weight="normal" fill="#555" text-anchor="start" textLength="7" lengthAdjust="spacingAndGlyphs" >Z</text>
<path d="M838.3 59.8 h11.2 l-4.3 4.8 v5.6 l-2.6 -1.5 v-4.1 z" stroke="#555" fill="none" stroke-width="1" stroke-linejoin="round"/>
<text x="826.6" y="87.9" font-size="9.3" font-weight="normal" fill="#3b3b3b" text-anchor="start" textLength="25.3" lengthAdjust="spacingAndGlyphs" >Sort &amp;</text>
<text x="825.8" y="99.8" font-size="9.3" font-weight="normal" fill="#3b3b3b" text-anchor="start" textLength="19.1" lengthAdjust="spacingAndGlyphs" >Filter</text>
<path d="M847.9 96.5 L849.95 98.5 L852 96.5" stroke="#555" fill="none" stroke-width="0.85" />
<circle cx="874.8" cy="62.1" r="7.8" fill="none" stroke="#555" stroke-width="1"/>
<line x1="869.2" y1="67.7" x2="861.3" y2="75.6" stroke="#555" stroke-width="1.1" />
<text x="859" y="87.9" font-size="9.3" font-weight="normal" fill="#3b3b3b" text-anchor="start" textLength="27.1" lengthAdjust="spacingAndGlyphs" >Find &amp;</text>
<text x="856.9" y="99.8" font-size="9.3" font-weight="normal" fill="#3b3b3b" text-anchor="start" textLength="22.9" lengthAdjust="spacingAndGlyphs" >Select</text>
<path d="M882.5 96.5 L884.65 98.5 L886.8 96.5" stroke="#555" fill="none" stroke-width="0.85" />
<rect x="909.9" y="54.8" width="19.6" height="19.3" fill="none" stroke="#d9552b" stroke-width="1.2" />
<rect x="912.4" y="56.8" width="6.3" height="6.3" fill="none" stroke="#d9552b" stroke-width="1.1" />
<rect x="921.2" y="56.8" width="6.3" height="6.3" fill="none" stroke="#d9552b" stroke-width="1.1" />
<rect x="912.4" y="65.6" width="6.3" height="6.3" fill="none" stroke="#d9552b" stroke-width="1.1" />
<rect x="921.2" y="65.6" width="6.3" height="6.3" fill="none" stroke="#d9552b" stroke-width="1.1" />
<text x="903.9" y="87.9" font-size="9.3" font-weight="normal" fill="#3b3b3b" text-anchor="start" textLength="31.5" lengthAdjust="spacingAndGlyphs" >Add-ins</text>
<rect x="955.8" y="53.2" width="22.4" height="22.6" fill="#fff" stroke="#4a4a4a" stroke-width="1" />
<rect x="955.8" y="53.2" width="22.4" height="2.2" fill="#666" />
<line x1="955.8" y1="61.1" x2="978.2" y2="61.1" stroke="#b0b0b0" stroke-width="0.7" />
<line x1="961.4" y1="56.2" x2="961.4" y2="75.8" stroke="#b0b0b0" stroke-width="0.7" />
<line x1="955.8" y1="66.0" x2="978.2" y2="66.0" stroke="#b0b0b0" stroke-width="0.7" />
<line x1="967.0" y1="56.2" x2="967.0" y2="75.8" stroke="#b0b0b0" stroke-width="0.7" />
<line x1="955.8" y1="70.9" x2="978.2" y2="70.9" stroke="#b0b0b0" stroke-width="0.7" />
<line x1="972.5999999999999" y1="56.2" x2="972.5999999999999" y2="75.8" stroke="#b0b0b0" stroke-width="0.7" />
<circle cx="966.2" cy="63" r="6.3" fill="#fff" stroke="#4a4a4a" stroke-width="1.1"/>
<rect x="963.2" y="61.8" width="1.6" height="4" fill="#777" />
<rect x="965.4" y="59.8" width="1.6" height="6" fill="#777" />
<rect x="967.6" y="60.8" width="1.8" height="5" fill="#3a96dd" />
<line x1="970.8" y1="67.6" x2="978" y2="75.6" stroke="#4a4a4a" stroke-width="1.3" />
<text x="951.2" y="87.9" font-size="9.3" font-weight="normal" fill="#3b3b3b" text-anchor="start" textLength="30.8" lengthAdjust="spacingAndGlyphs" >Analyze</text>
<text x="958.7" y="99.8" font-size="9.3" font-weight="normal" fill="#3b3b3b" text-anchor="start" textLength="17.4" lengthAdjust="spacingAndGlyphs" >Data</text>
<rect x="4.5" y="128.5" width="75.2" height="19" fill="#ffffff" stroke="#d6d6d6" stroke-width="1" />
<text x="8.6" y="142" font-size="10.3" font-weight="normal" fill="#333" text-anchor="start" textLength="12" lengthAdjust="spacingAndGlyphs" >G7</text>
<path d="M69.5 136.3 h6 l-3 3.2 z" stroke="none" fill="#666" stroke-width="1" />
<rect x="90.8" y="133.9" width="1.2" height="1.2" fill="#9a9a9a" />
<rect x="90.8" y="137.70000000000002" width="1.2" height="1.2" fill="#9a9a9a" />
<rect x="90.8" y="141.4" width="1.2" height="1.2" fill="#9a9a9a" />
<rect x="103.3" y="128.6" width="81.4" height="18.8" fill="#ffffff" stroke="#d6d6d6" stroke-width="1" />
<path d="M113.8 134.8 l7 7 M120.8 134.8 l-7 7" stroke="#b8b8b8" fill="none" stroke-width="1.2" />
<path d="M139.6 137.8 l3.2 3.5 l5.8 -6.2" stroke="#c4c4c4" fill="none" stroke-width="1.5" />
<text x="167" y="141.2" font-size="11" font-weight="normal" fill="#707070" text-anchor="start" textLength="4.8" lengthAdjust="spacingAndGlyphs" style="font-family:Liberation Serif" font-style="italic">f</text>
<text x="171" y="142.3" font-size="7.5" font-weight="normal" fill="#707070" text-anchor="start" textLength="4.6" lengthAdjust="spacingAndGlyphs" style="font-family:Liberation Serif" font-style="italic">x</text>
<rect x="187.5" y="128.5" width="833" height="33.5" fill="#ffffff" stroke="#d6d6d6" stroke-width="1" />
<path d="M1011.8 139 l3 -3 l3 3" stroke="#444" fill="none" stroke-width="1" />
<text x="196.9" y="142.2" font-size="11" font-weight="normal" fill="#3a3a3a" text-anchor="start" textLength="198" lengthAdjust="spacingAndGlyphs" >=VLOOKUP(F7, 'Store Sales'!B2:F9, 2, FALSE)</text>
<rect x="0" y="170" width="1009" height="22" fill="#e6e6e6" />
<rect x="0" y="192" width="31" height="308" fill="#e6e6e6" />
<rect x="561.3" y="170" width="126.2" height="22" fill="#d2d2d2" />
<rect x="0" y="327.4" width="31" height="24.100000000000023" fill="#d2d2d2" />
<line x1="71.5" y1="171" x2="71.5" y2="192" stroke="#c8c8c8" stroke-width="1" />
<line x1="207.5" y1="171" x2="207.5" y2="192" stroke="#c8c8c8" stroke-width="1" />
<line x1="289.6" y1="171" x2="289.6" y2="192" stroke="#c8c8c8" stroke-width="1" />
<line x1="346.8" y1="171" x2="346.8" y2="192" stroke="#c8c8c8" stroke-width="1" />
<line x1="449.1" y1="171" x2="449.1" y2="192" stroke="#c8c8c8" stroke-width="1" />
<line x1="561.3" y1="171" x2="561.3" y2="192" stroke="#c8c8c8" stroke-width="1" />
<line x1="687.5" y1="171" x2="687.5" y2="192" stroke="#c8c8c8" stroke-width="1" />
<line x1="764.2" y1="171" x2="764.2" y2="192" stroke="#c8c8c8" stroke-width="1" />
<line x1="840.5" y1="171" x2="840.5" y2="192" stroke="#c8c8c8" stroke-width="1" />
<line x1="917" y1="171" x2="917" y2="192" stroke="#c8c8c8" stroke-width="1" />
<line x1="993.7" y1="171" x2="993.7" y2="192" stroke="#c8c8c8" stroke-width="1" />
<line x1="71.5" y1="192" x2="71.5" y2="500" stroke="#dcdcdc" stroke-width="1" />
<line x1="207.5" y1="192" x2="207.5" y2="500" stroke="#dcdcdc" stroke-width="1" />
<line x1="289.6" y1="192" x2="289.6" y2="500" stroke="#dcdcdc" stroke-width="1" />
<line x1="346.8" y1="192" x2="346.8" y2="500" stroke="#dcdcdc" stroke-width="1" />
<line x1="449.1" y1="192" x2="449.1" y2="500" stroke="#dcdcdc" stroke-width="1" />
<line x1="561.3" y1="192" x2="561.3" y2="500" stroke="#dcdcdc" stroke-width="1" />
<line x1="687.5" y1="192" x2="687.5" y2="500" stroke="#dcdcdc" stroke-width="1" />
<line x1="764.2" y1="192" x2="764.2" y2="500" stroke="#dcdcdc" stroke-width="1" />
<line x1="840.5" y1="192" x2="840.5" y2="500" stroke="#dcdcdc" stroke-width="1" />
<line x1="917" y1="192" x2="917" y2="500" stroke="#dcdcdc" stroke-width="1" />
<line x1="993.7" y1="192" x2="993.7" y2="500" stroke="#dcdcdc" stroke-width="1" />
<line x1="0" y1="204.2" x2="31" y2="204.2" stroke="#c8c8c8" stroke-width="1" />
<line x1="31" y1="204.2" x2="1009" y2="204.2" stroke="#dcdcdc" stroke-width="1" />
<line x1="0" y1="228.2" x2="31" y2="228.2" stroke="#c8c8c8" stroke-width="1" />
<line x1="31" y1="228.2" x2="1009" y2="228.2" stroke="#dcdcdc" stroke-width="1" />
<line x1="0" y1="252.4" x2="31" y2="252.4" stroke="#c8c8c8" stroke-width="1" />
<line x1="31" y1="252.4" x2="1009" y2="252.4" stroke="#dcdcdc" stroke-width="1" />
<line x1="0" y1="277" x2="31" y2="277" stroke="#c8c8c8" stroke-width="1" />
<line x1="31" y1="277" x2="1009" y2="277" stroke="#dcdcdc" stroke-width="1" />
<line x1="0" y1="301.6" x2="31" y2="301.6" stroke="#c8c8c8" stroke-width="1" />
<line x1="31" y1="301.6" x2="1009" y2="301.6" stroke="#dcdcdc" stroke-width="1" />
<line x1="0" y1="327.4" x2="31" y2="327.4" stroke="#c8c8c8" stroke-width="1" />
<line x1="31" y1="327.4" x2="1009" y2="327.4" stroke="#dcdcdc" stroke-width="1" />
<line x1="0" y1="351.5" x2="31" y2="351.5" stroke="#c8c8c8" stroke-width="1" />
<line x1="31" y1="351.5" x2="1009" y2="351.5" stroke="#dcdcdc" stroke-width="1" />
<line x1="0" y1="375.5" x2="31" y2="375.5" stroke="#c8c8c8" stroke-width="1" />
<line x1="31" y1="375.5" x2="1009" y2="375.5" stroke="#dcdcdc" stroke-width="1" />
<line x1="0" y1="399.5" x2="31" y2="399.5" stroke="#c8c8c8" stroke-width="1" />
<line x1="31" y1="399.5" x2="1009" y2="399.5" stroke="#dcdcdc" stroke-width="1" />
<line x1="0" y1="423.5" x2="31" y2="423.5" stroke="#c8c8c8" stroke-width="1" />
<line x1="31" y1="423.5" x2="1009" y2="423.5" stroke="#dcdcdc" stroke-width="1" />
<line x1="0" y1="447.5" x2="31" y2="447.5" stroke="#c8c8c8" stroke-width="1" />
<line x1="31" y1="447.5" x2="1009" y2="447.5" stroke="#dcdcdc" stroke-width="1" />
<line x1="0" y1="471.5" x2="31" y2="471.5" stroke="#c8c8c8" stroke-width="1" />
<line x1="31" y1="471.5" x2="1009" y2="471.5" stroke="#dcdcdc" stroke-width="1" />
<line x1="0" y1="495.5" x2="31" y2="495.5" stroke="#c8c8c8" stroke-width="1" />
<line x1="31" y1="495.5" x2="1009" y2="495.5" stroke="#dcdcdc" stroke-width="1" />
<line x1="31" y1="170" x2="31" y2="500" stroke="#bdbdbd" stroke-width="1" />
<line x1="0" y1="192.4" x2="1009" y2="192.4" stroke="#bdbdbd" stroke-width="1" />
<text x="51.25" y="187.9" font-size="15" font-weight="normal" fill="#262626" text-anchor="middle" >A</text>
<text x="139.5" y="187.9" font-size="15" font-weight="normal" fill="#262626" text-anchor="middle" >B</text>
<text x="248.55" y="187.9" font-size="15" font-weight="normal" fill="#262626" text-anchor="middle" >C</text>
<text x="318.20000000000005" y="187.9" font-size="15" font-weight="normal" fill="#262626" text-anchor="middle" >D</text>
<text x="397.95000000000005" y="187.9" font-size="15" font-weight="normal" fill="#262626" text-anchor="middle" >E</text>
<text x="505.2" y="187.9" font-size="15" font-weight="normal" fill="#262626" text-anchor="middle" >F</text>
<text x="624.4" y="187.9" font-size="15" font-weight="normal" fill="#217346" text-anchor="middle" >G</text>
<text x="725.85" y="187.9" font-size="15" font-weight="normal" fill="#262626" text-anchor="middle" >H</text>
<text x="802.35" y="187.9" font-size="15" font-weight="normal" fill="#262626" text-anchor="middle" >I</text>
<text x="878.75" y="187.9" font-size="15" font-weight="normal" fill="#262626" text-anchor="middle" >J</text>
<text x="955.35" y="187.9" font-size="15" font-weight="normal" fill="#262626" text-anchor="middle" >K</text>
<line x1="561.3" y1="191.4" x2="687.5" y2="191.4" stroke="#217346" stroke-width="2" />
<line x1="31" y1="327.4" x2="31" y2="351.5" stroke="#217346" stroke-width="2" />
<rect x="16" y="192" width="1.4" height="4.7" fill="#333" />
<text x="15.8" y="222.2" font-size="15" font-weight="normal" fill="#262626" text-anchor="middle" >2</text>
<text x="15.8" y="246.4" font-size="15" font-weight="normal" fill="#262626" text-anchor="middle" >3</text>
<text x="15.8" y="271" font-size="15" font-weight="normal" fill="#262626" text-anchor="middle" >4</text>
<text x="15.8" y="295.6" font-size="15" font-weight="normal" fill="#262626" text-anchor="middle" >5</text>
<text x="15.8" y="321.4" font-size="15" font-weight="normal" fill="#262626" text-anchor="middle" >6</text>
<text x="15.8" y="345.5" font-size="15" font-weight="normal" fill="#217346" text-anchor="middle" >7</text>
<text x="15.8" y="369.5" font-size="15" font-weight="normal" fill="#262626" text-anchor="middle" >8</text>
<text x="15.8" y="393.5" font-size="15" font-weight="normal" fill="#262626" text-anchor="middle" >9</text>
<text x="15.8" y="417.5" font-size="15" font-weight="normal" fill="#262626" text-anchor="middle" >10</text>
<text x="15.8" y="441.5" font-size="15" font-weight="normal" fill="#262626" text-anchor="middle" >11</text>
<text x="15.8" y="465.5" font-size="15" font-weight="normal" fill="#262626" text-anchor="middle" >12</text>
<text x="15.8" y="489.5" font-size="15" font-weight="normal" fill="#262626" text-anchor="middle" >13</text>
<rect x="0" y="170" width="31" height="22" fill="#e6e6e6" />
<path d="M13.5 189.5 L29.3 174 L29.3 189.5 z" stroke="none" fill="#b8b8b8" stroke-width="1" />
<line x1="0" y1="192.4" x2="31" y2="192.4" stroke="#bdbdbd" stroke-width="1" />
<line x1="31" y1="170" x2="31" y2="192" stroke="#bdbdbd" stroke-width="1" />
<rect x="1009" y="170" width="15" height="330" fill="#f1f0ef" />
<rect x="1011" y="172.5" width="12" height="330" fill="#ffffff" stroke="#c8c8c8" stroke-width="1" />
<line x1="1011" y1="183.5" x2="1023" y2="183.5" stroke="#c8c8c8" stroke-width="1" />
<path d="M1014 180.5 l3 -3.5 l3 3.5 z" stroke="none" fill="#333" stroke-width="1" />
<line x1="1011" y1="393" x2="1023" y2="393" stroke="#c8c8c8" stroke-width="1" />
<rect x="1011.5" y="393.5" width="11" height="107" fill="#f1f0ef" />
<line x1="1008.6" y1="192" x2="1008.6" y2="500" stroke="#a8a8a8" stroke-width="1.1" />
<rect x="1011.5" y="498" width="11" height="4" fill="#fff" stroke="#a0a0a0" stroke-width="1" />
<rect x="207.5" y="204.4" width="353.8" height="73" fill="#ffff00" stroke="#1a1a1a" stroke-width="2" />
<text x="220.5" y="224" font-size="15.5" font-weight="bold" fill="#111" text-anchor="start" textLength="328" lengthAdjust="spacingAndGlyphs" xml:space="preserve">Highest Value -  Method 2 (Using VLOOKUP to</text>
<text x="263.5" y="247.7" font-size="15.5" font-weight="bold" fill="#111" text-anchor="start" textLength="243" lengthAdjust="spacingAndGlyphs" >Return Value from Another Sheet)</text>
<rect x="71.5" y="301.6" width="218.10000000000002" height="25.799999999999955" fill="#92d050" />
<rect x="71.5" y="327.4" width="218.10000000000002" height="168.10000000000002" fill="#ffffff" />
<line x1="70.95" y1="301.6" x2="290.15000000000003" y2="301.6" stroke="#363636" stroke-width="1.1" />
<line x1="70.95" y1="327.4" x2="290.15000000000003" y2="327.4" stroke="#363636" stroke-width="1.1" />
<line x1="70.95" y1="351.5" x2="290.15000000000003" y2="351.5" stroke="#363636" stroke-width="1.1" />
<line x1="70.95" y1="375.5" x2="290.15000000000003" y2="375.5" stroke="#363636" stroke-width="1.1" />
<line x1="70.95" y1="399.5" x2="290.15000000000003" y2="399.5" stroke="#363636" stroke-width="1.1" />
<line x1="70.95" y1="423.5" x2="290.15000000000003" y2="423.5" stroke="#363636" stroke-width="1.1" />
<line x1="70.95" y1="447.5" x2="290.15000000000003" y2="447.5" stroke="#363636" stroke-width="1.1" />
<line x1="70.95" y1="471.5" x2="290.15000000000003" y2="471.5" stroke="#363636" stroke-width="1.1" />
<line x1="70.95" y1="495.5" x2="290.15000000000003" y2="495.5" stroke="#363636" stroke-width="1.1" />
<line x1="71.5" y1="301.6" x2="71.5" y2="495.5" stroke="#363636" stroke-width="1.1" />
<line x1="207.5" y1="301.6" x2="207.5" y2="495.5" stroke="#363636" stroke-width="1.1" />
<line x1="289.6" y1="301.6" x2="289.6" y2="495.5" stroke="#363636" stroke-width="1.1" />
<text x="77.4" y="321.4" font-size="16.3" font-weight="normal" fill="#ffffff" text-anchor="start" textLength="124" lengthAdjust="spacingAndGlyphs" stroke="#ffffff" stroke-width="0.45">Total Yearly Sales</text>
<text x="219.6" y="321.4" font-size="16.3" font-weight="normal" fill="#ffffff" text-anchor="start" textLength="57.4" lengthAdjust="spacingAndGlyphs" stroke="#ffffff" stroke-width="0.45">Store ID</text>
<text x="80.3" y="345.5" font-size="16" font-weight="normal" fill="#111" text-anchor="start" textLength="8.5" lengthAdjust="spacingAndGlyphs" >$</text>
<text x="198.8" y="345.5" font-size="16" font-weight="normal" fill="#111" text-anchor="end" textLength="39.3" lengthAdjust="spacingAndGlyphs" >3,194</text>
<text x="285" y="345.5" font-size="16" font-weight="normal" fill="#111" text-anchor="end" textLength="25.5" lengthAdjust="spacingAndGlyphs" >315</text>
<text x="80.3" y="369.5" font-size="16" font-weight="normal" fill="#111" text-anchor="start" textLength="8.5" lengthAdjust="spacingAndGlyphs" >$</text>
<text x="198.8" y="369.5" font-size="16" font-weight="normal" fill="#111" text-anchor="end" textLength="39.3" lengthAdjust="spacingAndGlyphs" >3,982</text>
<text x="285" y="369.5" font-size="16" font-weight="normal" fill="#111" text-anchor="end" textLength="25.5" lengthAdjust="spacingAndGlyphs" >545</text>
<text x="80.3" y="393.5" font-size="16" font-weight="normal" fill="#111" text-anchor="start" textLength="8.5" lengthAdjust="spacingAndGlyphs" >$</text>
<text x="198.8" y="393.5" font-size="16" font-weight="normal" fill="#111" text-anchor="end" textLength="39.3" lengthAdjust="spacingAndGlyphs" >6,446</text>
<text x="285" y="393.5" font-size="16" font-weight="normal" fill="#111" text-anchor="end" textLength="25.5" lengthAdjust="spacingAndGlyphs" >544</text>
<text x="80.3" y="417.5" font-size="16" font-weight="normal" fill="#111" text-anchor="start" textLength="8.5" lengthAdjust="spacingAndGlyphs" >$</text>
<text x="198.8" y="417.5" font-size="16" font-weight="normal" fill="#111" text-anchor="end" textLength="39.3" lengthAdjust="spacingAndGlyphs" >5,841</text>
<text x="285" y="417.5" font-size="16" font-weight="normal" fill="#111" text-anchor="end" textLength="25.5" lengthAdjust="spacingAndGlyphs" >312</text>
<text x="80.3" y="441.5" font-size="16" font-weight="normal" fill="#111" text-anchor="start" textLength="8.5" lengthAdjust="spacingAndGlyphs" >$</text>
<text x="198.8" y="441.5" font-size="16" font-weight="normal" fill="#111" text-anchor="end" textLength="39.3" lengthAdjust="spacingAndGlyphs" >5,627</text>
<text x="285" y="441.5" font-size="16" font-weight="normal" fill="#111" text-anchor="end" textLength="25.5" lengthAdjust="spacingAndGlyphs" >513</text>
<text x="80.3" y="465.5" font-size="16" font-weight="normal" fill="#111" text-anchor="start" textLength="8.5" lengthAdjust="spacingAndGlyphs" >$</text>
<text x="198.8" y="465.5" font-size="16" font-weight="normal" fill="#111" text-anchor="end" textLength="39.3" lengthAdjust="spacingAndGlyphs" >6,478</text>
<text x="285" y="465.5" font-size="16" font-weight="normal" fill="#111" text-anchor="end" textLength="25.5" lengthAdjust="spacingAndGlyphs" >448</text>
<text x="80.3" y="489.5" font-size="16" font-weight="normal" fill="#111" text-anchor="start" textLength="8.5" lengthAdjust="spacingAndGlyphs" >$</text>
<text x="198.8" y="489.5" font-size="16" font-weight="normal" fill="#111" text-anchor="end" textLength="39.3" lengthAdjust="spacingAndGlyphs" >5,150</text>
<text x="285" y="489.5" font-size="16" font-weight="normal" fill="#111" text-anchor="end" textLength="25.5" lengthAdjust="spacingAndGlyphs" >446</text>
<rect x="346.8" y="301.6" width="340.7000000000001" height="25.799999999999955" fill="#92d050" />
<rect x="346.8" y="327.4" width="340.7000000000001" height="24.100000000000023" fill="#ffffff" />
<line x1="346.25" y1="301.6" x2="688.0500000000001" y2="301.6" stroke="#363636" stroke-width="1.1" />
<line x1="346.25" y1="327.4" x2="688.0500000000001" y2="327.4" stroke="#363636" stroke-width="1.1" />
<line x1="346.25" y1="351.5" x2="688.0500000000001" y2="351.5" stroke="#363636" stroke-width="1.1" />
<line x1="346.8" y1="301.6" x2="346.8" y2="351.5" stroke="#363636" stroke-width="1.1" />
<line x1="449.1" y1="301.6" x2="449.1" y2="351.5" stroke="#363636" stroke-width="1.1" />
<line x1="561.3000000000001" y1="301.6" x2="561.3000000000001" y2="351.5" stroke="#363636" stroke-width="1.1" />
<line x1="687.5000000000001" y1="301.6" x2="687.5000000000001" y2="351.5" stroke="#363636" stroke-width="1.1" />
<text x="350.8" y="321.4" font-size="16.3" font-weight="normal" fill="#ffffff" text-anchor="start" textLength="94.7" lengthAdjust="spacingAndGlyphs" stroke="#ffffff" stroke-width="0.45">Highest Sales</text>
<text x="476" y="321.4" font-size="16.3" font-weight="normal" fill="#ffffff" text-anchor="start" textLength="57.4" lengthAdjust="spacingAndGlyphs" stroke="#ffffff" stroke-width="0.45">Store ID</text>
<text x="582" y="321.4" font-size="16.3" font-weight="normal" fill="#ffffff" text-anchor="start" textLength="84.5" lengthAdjust="spacingAndGlyphs" stroke="#ffffff" stroke-width="0.45">Store Name</text>
<text x="355.4" y="345.5" font-size="16" font-weight="normal" fill="#111" text-anchor="start" textLength="8.5" lengthAdjust="spacingAndGlyphs" >$</text>
<text x="440.5" y="345.5" font-size="16" font-weight="normal" fill="#111" text-anchor="end" textLength="39.5" lengthAdjust="spacingAndGlyphs" >6,478</text>
<text x="557.5" y="345.5" font-size="16" font-weight="normal" fill="#111" text-anchor="end" textLength="25.5" lengthAdjust="spacingAndGlyphs" >448</text>
<text x="564.4" y="345.5" font-size="16" font-weight="normal" fill="#111" text-anchor="start" textLength="97.6" lengthAdjust="spacingAndGlyphs" >Stafford Store</text>
<rect x="346.8" y="375.5" width="340.7000000000001" height="24.0" fill="#92d050" />
<rect x="346.8" y="399.5" width="340.7000000000001" height="24.0" fill="#ffffff" />
<line x1="346.25" y1="375.5" x2="688.0500000000001" y2="375.5" stroke="#363636" stroke-width="1.1" />
<line x1="346.25" y1="399.5" x2="688.0500000000001" y2="399.5" stroke="#363636" stroke-width="1.1" />
<line x1="346.25" y1="423.5" x2="688.0500000000001" y2="423.5" stroke="#363636" stroke-width="1.1" />
<line x1="346.8" y1="375.5" x2="346.8" y2="423.5" stroke="#363636" stroke-width="1.1" />
<line x1="449.1" y1="375.5" x2="449.1" y2="423.5" stroke="#363636" stroke-width="1.1" />
<line x1="561.3000000000001" y1="375.5" x2="561.3000000000001" y2="423.5" stroke="#363636" stroke-width="1.1" />
<line x1="687.5000000000001" y1="375.5" x2="687.5000000000001" y2="423.5" stroke="#363636" stroke-width="1.1" />
<text x="352.4" y="393.5" font-size="16.3" font-weight="normal" fill="#ffffff" text-anchor="start" textLength="90.7" lengthAdjust="spacingAndGlyphs" stroke="#ffffff" stroke-width="0.45">Lowest Sales</text>
<text x="476" y="393.5" font-size="16.3" font-weight="normal" fill="#ffffff" text-anchor="start" textLength="57.4" lengthAdjust="spacingAndGlyphs" stroke="#ffffff" stroke-width="0.45">Store ID</text>
<text x="582" y="393.5" font-size="16.3" font-weight="normal" fill="#ffffff" text-anchor="start" textLength="84.5" lengthAdjust="spacingAndGlyphs" stroke="#ffffff" stroke-width="0.45">Store Name</text>
<text x="355.4" y="417.5" font-size="16" font-weight="normal" fill="#111" text-anchor="start" textLength="8.5" lengthAdjust="spacingAndGlyphs" >$</text>
<text x="440.7" y="417.5" font-size="16" font-weight="normal" fill="#111" text-anchor="end" textLength="39.9" lengthAdjust="spacingAndGlyphs" >3,194</text>
<text x="557.5" y="417.5" font-size="16" font-weight="normal" fill="#111" text-anchor="end" textLength="25.5" lengthAdjust="spacingAndGlyphs" >315</text>
<rect x="686" y="351" width="3.5" height="2.5" fill="#217346" />
<rect x="193" y="128.8" width="210" height="17.5" fill="none" stroke="#ec1c24" stroke-width="3.8" />
<rect x="561.6" y="326" width="127.9" height="23.5" fill="none" stroke="#ec1c24" stroke-width="3.8" />
<path d="M403 137.6 H718 V335.3 H691" stroke="#ec1c24" fill="none" stroke-width="3.8" />
</svg>
</body></html>
